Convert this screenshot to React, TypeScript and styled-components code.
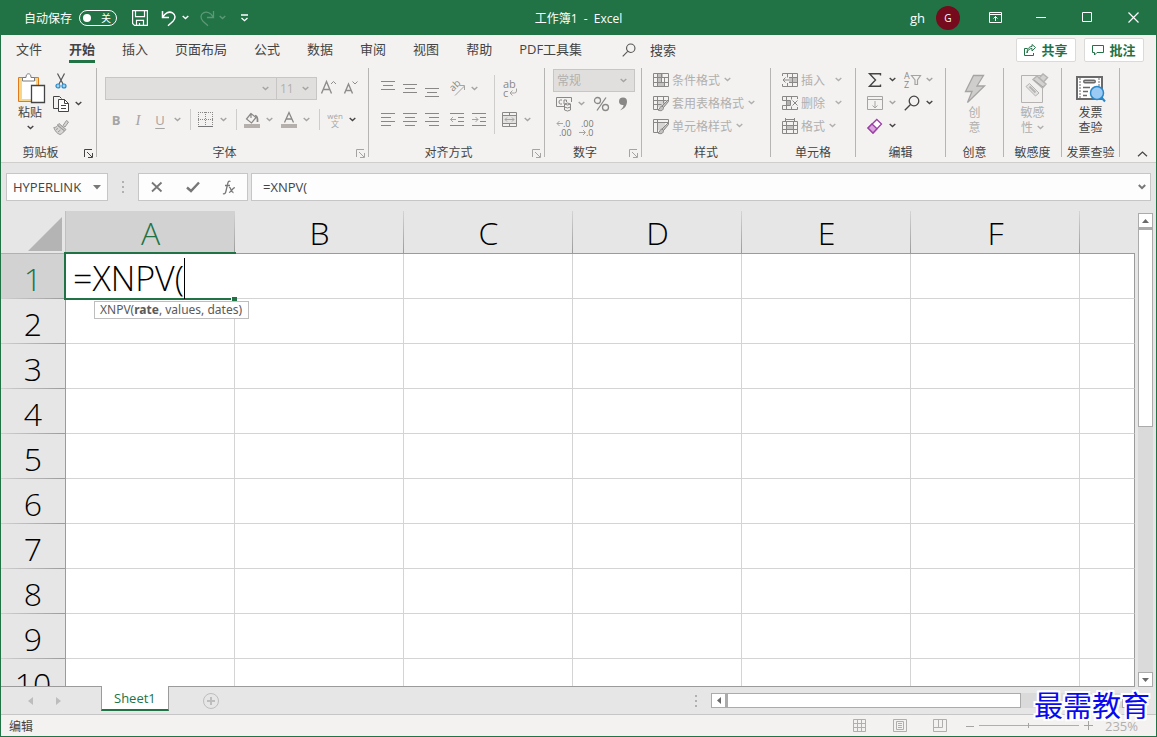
import React from 'react';
import styled, { createGlobalStyle, css } from 'styled-components';

const green = '#217346';
const uiFont = '"Open Sans", "Noto Sans CJK SC", sans-serif';
const dim = '#a6a4a2';
const dark = '#444444';

const GlobalStyle = createGlobalStyle`
  *, *::before, *::after { box-sizing: border-box; }
  body { margin: 0; background: #e6e6e6; font-family: ${uiFont}; font-size: 12px; color: ${dark}; }
  button, input, select { font: inherit; color: inherit; margin: 0; padding: 0; border: 0; background: none; border-radius: 0; outline: 0; }
  svg { display: block; flex: none; overflow: visible; }
`;

const Window = styled.div`
  position: relative;
  display: flex;
  flex-direction: column;
  height: 100vh;
  overflow: hidden;
  border: 1px solid ${green};
  border-top: 0;
`;

/* ---------- title bar ---------- */
const TitleBar = styled.header`
  display: grid;
  grid-template-columns: 1fr auto 1fr;
  align-items: center;
  flex: none;
  height: 35px;
  background: ${green};
  color: #fff;
`;
const QuickAccess = styled.div`
  display: flex;
  align-items: center;
  padding-left: 23px;
`;
const AutoSave = styled.label`
  display: flex;
  align-items: center;
  gap: 7px;
  margin-right: 12px;
`;
const Toggle = styled.span`
  display: flex;
  align-items: center;
  justify-content: space-between;
  width: 38px;
  height: 16px;
  padding: 0 5px 0 3px;
  border: 1px solid #fff;
  border-radius: 8px;
  font-size: 10px;
  line-height: 14px;
`;
const ToggleKnob = styled.input`
  appearance: none;
  width: 8px;
  height: 8px;
  border-radius: 50%;
  background: #fff;
`;
const History = styled.div`
  display: flex;
  align-items: center;
  margin: 0 2px 0 6px;
`;
const Title = styled.h1`
  margin: 0;
  font-size: 12px;
  font-weight: 400;
  white-space: pre;
`;
const WindowControls = styled.div`
  display: flex;
  align-items: center;
  justify-content: flex-end;
  height: 100%;
`;
const UserName = styled.span`
  margin-right: 11px;
  font-size: 13px;
`;
const Avatar = styled.span`
  width: 24px;
  margin-right: 12px;
  border-radius: 50%;
  background: #750b1c;
  font-size: 10px;
  line-height: 24px;
  text-align: center;
`;
const WindowButton = styled.button`
  display: flex;
  align-items: center;
  justify-content: center;
  width: 46px;
  height: 100%;
`;

/* ---------- tabs ---------- */
const TabBar = styled.nav`
  display: flex;
  align-items: center;
  flex: none;
  gap: 27px;
  height: 29px;
  padding: 0 12px 0 15px;
  background: #f3f2f1;
  font-size: 13px;
`;
const Tab = styled.button<{ $active?: boolean }>`
  height: 28px;
  padding-top: 2px;
  align-self: flex-start;
  border-bottom: 3px solid ${p => (p.$active ? green : 'transparent')};
  font-weight: ${p => (p.$active ? 700 : 400)};
  white-space: nowrap;
`;
const Search = styled.button`
  display: flex;
  align-items: center;
  gap: 14px;
  margin-left: 13px;
  white-space: nowrap;
`;
const TabActions = styled.div`
  display: flex;
  gap: 8px;
  margin-left: auto;
`;
const ActionButton = styled.button`
  display: flex;
  align-items: center;
  justify-content: center;
  gap: 5px;
  width: 60px;
  height: 24px;
  border: 1px solid #dcdad8;
  border-radius: 2px;
  background: #fff;
  color: ${green};
  font-weight: 700;
  white-space: nowrap;
`;

/* ---------- ribbon ---------- */
const Ribbon = styled.section`
  display: flex;
  flex: none;
  height: 99px;
  padding: 4px 0 5px;
  border-bottom: 1px solid #d0cecd;
  background: #f3f2f1;
`;
const Group = styled.div<{ $width: number }>`
  display: flex;
  flex-direction: column;
  flex: none;
  width: ${p => p.$width}px;
  border-right: 1px solid #b7b5b3;
`;
const GroupBody = styled.div<{ $pad?: number; $center?: boolean }>`
  display: flex;
  flex: 1;
  justify-content: ${p => (p.$center ? 'center' : 'flex-start')};
  padding-left: ${p => p.$pad ?? 0}px;
`;
const GroupFooter = styled.div`
  display: flex;
  align-items: center;
  height: 16px;
  margin-bottom: -4px;
  line-height: 16px;
  white-space: nowrap;
`;
const GroupName = styled.span`
  flex: 1;
  text-align: center;
`;
const Launcher = styled.button`
  display: flex;
  justify-content: center;
  width: 16px;
`;
const Stack = styled.div<{ $top?: number; $gap?: number; $left?: number }>`
  display: flex;
  flex-direction: column;
  gap: ${p => p.$gap ?? 0}px;
  padding-top: ${p => p.$top ?? 0}px;
  padding-left: ${p => p.$left ?? 0}px;
`;
const Row = styled.div<{ $gap?: number }>`
  display: flex;
  align-items: center;
  height: 23px;
  gap: ${p => p.$gap ?? 0}px;
`;
const Cluster = styled.div`
  display: flex;
  align-items: center;
`;
const ToolButton = styled.button`
  display: flex;
  align-items: center;
  justify-content: center;
  width: 22px;
  height: 22px;
  color: ${dim};
`;
const ArrowButton = styled.button`
  display: flex;
  align-items: center;
  justify-content: center;
  width: 15px;
  height: 22px;
  padding-right: 2px;
`;
const LetterButton = styled(ToolButton)<{ $kind: 'b' | 'i' | 'u' }>`
  font-size: 13px;
  line-height: 16px;
  ${p => p.$kind === 'b' && css`font-weight: 700;`}
  ${p => p.$kind === 'i' && css`font-family: "Liberation Serif", serif; font-style: italic; font-size: 15px;`}
  ${p => p.$kind === 'u' && css`text-decoration: underline; text-underline-offset: 3px;`}
`;
const Divider = styled.span<{ $height: number }>`
  flex: none;
  width: 1px;
  height: ${p => p.$height}px;
  margin: 0 4px;
  background: #cfcdcb;
`;
const MenuButton = styled.button`
  display: flex;
  align-items: center;
  gap: 3px;
  height: 23px;
  color: #b1afad;
  white-space: nowrap;
`;
const MenuText = styled.span<{ $min?: number }>`
  min-width: ${p => p.$min ?? 0}px;
  margin-right: 1px;
  text-align: left;
`;
const BigButton = styled.button<{ $dim?: boolean }>`
  display: flex;
  flex-direction: column;
  align-items: center;
  padding-top: 4px;
  align-self: flex-start;
  color: ${p => (p.$dim ? '#b1afad' : dark)};
  line-height: 15px;
  white-space: nowrap;
`;
const BigIcon = styled.span`
  display: flex;
  align-items: center;
  height: 33px;
`;
const BigLine = styled.span`
  display: flex;
  align-items: center;
  gap: 4px;
  height: 15px;
`;
const ComboFrame = styled.span<{ $width: number; $joined?: boolean }>`
  display: grid;
  grid-template-columns: 1fr 14px;
  align-items: center;
  width: ${p => p.$width}px;
  height: 23px;
  border: 1px solid #c8c6c4;
  ${p => p.$joined && css`border-left: 0;`}
  background: #e1dfdd;
  color: #b1afad;
`;
const Combo = styled.select`
  grid-area: 1 / 1;
  appearance: none;
  height: 21px;
  padding-left: 3px;
  opacity: 1;
`;
const CollapseArea = styled.div`
  display: flex;
  flex: 1;
  align-items: flex-end;
  justify-content: flex-end;
  padding-right: 8px;
`;
const SmallType = styled.span`
  display: flex;
  flex-direction: column;
  align-items: center;
  font-size: 8px;
  line-height: 8px;
`;

/* ---------- formula bar ---------- */
const FormulaBar = styled.section`
  display: flex;
  align-items: center;
  flex: none;
  height: 48px;
  padding: 0 5px;
  background: #e6e6e6;
  font-size: 13px;
`;
const Field = styled.div`
  display: flex;
  align-items: center;
  height: 28px;
  border: 1px solid #c6c6c6;
  background: #fdfdfd;
`;
const NameBox = styled(Field)`
  width: 102px;
  padding: 0 6px;
`;
const FormulaButtons = styled(Field)`
  width: 110px;
  margin-right: 3px;
  justify-content: space-around;
`;
const FormulaField = styled(Field)`
  flex: 1;
  padding: 0 4px 0 11px;
`;
const TextInput = styled.input`
  flex: 1;
  min-width: 0;
`;
const Dots = styled.span`
  display: flex;
  flex-direction: column;
  gap: 3px;
  padding: 0 14px;
  &::before, &::after { content: ''; }
  i, &::before, &::after { width: 2px; height: 2px; background: #b0b0b0; }
`;

/* ---------- sheet ---------- */
const SheetArea = styled.main`
  display: flex;
  flex: 1;
  min-height: 0;
  background: #e6e6e6;
`;
const GridViewport = styled.div`
  flex: 1;
  min-width: 0;
  overflow: hidden;
  border-bottom: 1px solid #9b9b9b;
`;
const Grid = styled.table`
  width: 100%;
  table-layout: fixed;
  border-collapse: separate;
  border-spacing: 0;
  font-size: 32px;
  font-weight: 350;
  line-height: 40px;
  color: #000;
`;
const headCell = css<{ $on?: boolean }>`
  padding: 0;
  font-weight: 350;
  text-align: center;
  background-color: ${p => (p.$on ? '#d2d2d2' : '#e6e6e6')};
  color: ${p => (p.$on ? green : '#000')};
`;
const Corner = styled.td`
  width: 65px;
  height: 43px;
  padding: 3px 3px 0 0;
  border-bottom: 1px solid #b1b1b1;
  border-right: 1px solid #c0c0c0;
`;
const CornerMark = styled.svg`
  margin-left: auto;
`;
const ColumnHead = styled.th<{ $on?: boolean; $last?: boolean }>`
  ${headCell}
  width: ${p => (p.$last ? 'auto' : '169px')};
  height: 43px;
  padding-top: 2px;
  border-bottom: 1px solid #9b9b9b;
  ${p => !p.$last && css`
    background-image: linear-gradient(#d4d4d4, #9b9b9b);
    background-size: 1px 100%;
    background-position: right;
    background-repeat: no-repeat;
  `}
`;
const RowHead = styled.th<{ $on?: boolean }>`
  ${headCell}
  height: 45px;
  padding-top: 4px;
  border-right: 1px solid #9b9b9b;
  background-image: linear-gradient(to right, #d0d0d0, #9b9b9b);
  background-size: 100% 1px;
  background-position: bottom;
  background-repeat: no-repeat;
`;
const Cell = styled.td<{ $last?: boolean }>`
  position: relative;
  padding: 0;
  border-right: 1px solid ${p => (p.$last ? '#9b9b9b' : '#d4d4d4')};
  border-bottom: 1px solid #d4d4d4;
  background: #fff;
`;
const ActiveCell = styled.div`
  position: absolute;
  z-index: 1;
  inset: -2px;
  display: flex;
  align-items: center;
  padding: 4px 0 0 7px;
  border: 2px solid ${green};
  border-right: 0;
  background: #fff;
  &::after {
    content: '';
    position: absolute;
    right: -1px;
    bottom: -3px;
    width: 6px;
    height: 4px;
    background: ${green};
    border-left: 1px solid #fff;
  }
`;
const CellInput = styled.input`
  field-sizing: content;
  height: 40px;
  font-size: 34px;
  line-height: 40px;
`;
const Caret = styled.span`
  width: 1px;
  height: 41px;
  background: #000;
`;
const FunctionTip = styled.div`
  position: absolute;
  z-index: 2;
  top: 47px;
  left: 28px;
  height: 18px;
  padding: 0 6px 0 5px;
  border: 1px solid #bebebe;
  background: #fff;
  color: #5a5a5a;
  font-family: "Noto Sans", sans-serif;
  font-size: 12px;
  font-weight: 400;
  line-height: 15px;
  white-space: nowrap;
`;
const VerticalScroll = styled.div`
  display: flex;
  flex-direction: column;
  width: 15px;
  margin: 2px 3px 0 3px;
  background: #dadada;
`;
const ScrollButton = styled.button`
  display: flex;
  flex: none;
  align-items: center;
  justify-content: center;
  width: 15px;
  height: 15px;
  border: 1px solid #ababab;
  background: #fff;
`;
const VerticalThumb = styled.div`
  flex: 0 0 42%;
  border: 1px solid #ababab;
  border-top-width: 2px;
  background: #fff;
`;
const Filler = styled.div`
  flex: 1;
`;

/* ---------- sheet tabs ---------- */
const SheetBar = styled.section`
  display: flex;
  flex: none;
  height: 27px;
  background: #e6e6e6;
`;
const SheetNav = styled.div`
  display: flex;
  align-items: center;
  justify-content: center;
  gap: 23px;
  width: 100px;
  padding-right: 14px;
`;
const SheetTab = styled.button`
  height: 25px;
  padding: 0 12px;
  margin-top: -1px;
  border: 1px solid #9b9b9b;
  border-top: 0;
  border-bottom: 2px solid ${green};
  background: #fff;
  color: ${green};
  font-size: 13px;
  line-height: 22px;
`;
const AddSheet = styled.button`
  display: flex;
  align-items: center;
  margin-left: 34px;
`;
const HorizontalScroll = styled.div`
  display: flex;
  flex: 0 0 426px;
  height: 15px;
  margin: 6px 19px 0 0;
  background: #dadada;
`;
const HorizontalThumb = styled.div`
  flex: 0 0 295px;
  border: 1px solid #ababab;
  border-left-width: 2px;
  background: #fff;
`;
const DotsHolder = styled.div`
  display: flex;
  align-items: center;
  margin-left: auto;
`;

/* ---------- status bar ---------- */
const StatusBar = styled.footer`
  display: flex;
  align-items: center;
  flex: none;
  height: 22px;
  padding: 0 18px 0 8px;
  border-top: 1px solid #c6c6c6;
  background: #f3f2f1;
`;
const ViewButtons = styled.div`
  display: flex;
  gap: 26px;
  margin: 0 19px 0 auto;
`;
const Zoom = styled.div`
  display: flex;
  align-items: center;
  gap: 5px;
  color: #b1afad;
  font-size: 13px;
`;
const ZoomSlider = styled.input`
  appearance: none;
  width: 100px;
  height: 7px;
  background: linear-gradient(#b1afad, #b1afad) center / 100% 1px no-repeat;
  &::-webkit-slider-thumb {
    appearance: none;
    width: 1px;
    height: 5px;
    background: #a6a4a2;
  }
`;
const ZoomValue = styled.span`
  margin-left: 7px;
`;
const Watermark = styled.div`
  position: absolute;
  right: 6px;
  bottom: 13px;
  color: #0a0af0;
  font-family: "Noto Sans CJK SC", sans-serif;
  font-size: 29px;
  line-height: 38px;
  text-shadow: 2px 0 #fff, -2px 0 #fff, 0 2px #fff, 0 -2px #fff, 2px 2px #fff, -2px -2px #fff, 2px -2px #fff, -2px 2px #fff;
`;

/* ---------- icons ---------- */
type IconProps = { w?: number; h?: number; c?: string; sw?: number; children: React.ReactNode };
const Icon = ({ w = 16, h = 16, c = dim, sw = 1, children }: IconProps) => (
  <svg width={w} height={h} viewBox={`0 0 ${w} ${h}`} fill="none" stroke={c} strokeWidth={sw} aria-hidden="true">
    {children}
  </svg>
);
const Chevron = ({ c = dim }: { c?: string }) => (
  <Icon w={7} h={5} c={c} sw={1.4}><path d="M.7 1 3.5 3.6 6.3 1" /></Icon>
);
const Arrow = ({ c, label }: { c?: string; label: string }) => (
  <ArrowButton aria-label={label}><Chevron c={c} /></ArrowButton>
);
const LaunchIcon = ({ c }: { c?: string }) => (
  <Icon w={9} h={9} c={c}><path d="M.5 8V.5H8M3 3l5 5M8.5 4v4.500H4" /></Icon>
);
const linePath = (rows: [number, number, number][]) => rows.map(([x, y, w]) => `M${x} ${y + 0.5}h${w}`).join('');
const Lines = ({ rows }: { rows: [number, number, number][] }) => (
  <Icon c="#8a8886"><path d={linePath(rows)} /></Icon>
);
const IndentIcon = ({ right }: { right?: boolean }) => (
  <Icon c="#8a8886">
    <path d={linePath([[1, 1, 14], [9, 5, 6], [9, 9, 6], [1, 13, 14]])} />
    <path d={right ? 'M1 7.500h6M4.500 5 7 7.500 4.500 10' : 'M1.500 7.500H7M4 5 1.500 7.500 4 10'} stroke={dim} />
  </Icon>
);
const PasteIcon = () => (
  <Icon w={24} h={32} c={dark}>
    <path d="M2.500 6.500h17v21h-17z" fill="#fff" stroke="#f8d689" strokeWidth="3" />
    <path d="M.5 4.500h20v24H.5z" stroke="#e07b1c" />
    <path d="M4.500 8V4.500H8C8 2 9 .8 10.500.8S13 2 13 4.500h3.500V8z" fill="#fff" stroke="#7a7a7a" />
    <path d="M13.500 12.500h13v17h-13z" fill="#fff" strokeWidth="1.300" />
  </Icon>
);
const CutIcon = () => (
  <Icon c="#555" sw={1.2}>
    <path d="M4.500.5 10 11M11.500.5 6 11" />
    <circle cx="5" cy="13" r="2" stroke="#2b88c8" fill="#9fd3f2" /><circle cx="11" cy="13" r="2" stroke="#2b88c8" fill="#9fd3f2" />
  </Icon>
);
const CopyIcon = () => (
  <Icon c={dark}>
    <path d="M5 12.500H.5V.5h6l2 2" />
    <path d="M5.500 3.500h6l4 4v8h-10z" fill="#fff" /><path d="M11.500 3.500v4h4M8 9.500h5M8 12.500h5" />
  </Icon>
);
const BrushIcon = () => (
  <Icon c="#9a9896">
    <path d="M10 6.500 13.500 1.500 15.500 3 12 8z" fill="#d8d6d4" />
    <path d="M6 4.500 13 10.500 11.500 12 4.500 6z" fill="#c8c6c4" />
    <path d="M4.500 6.500C4 8 2 8.500.8 8.500 2 12 4 14.500 7 15.500c2-.8 3.500-2 4.300-3.700z" fill="#d8d6d4" /><path d="m3 10.500 2-1M5 13l2.500-2" />
  </Icon>
);
const BorderIcon = () => (
  <Icon><path d="M.5 0v14M14.500 0v14M7.500 0v14M0 .5h15M0 7.500h15" strokeDasharray="1 1" stroke="#8a8886" /><path d="M0 14.500h15" stroke="#777" /></Icon>
);
const FillIcon = () => (
  <Icon><path d="M0 14h16" stroke="#b5b0ac" strokeWidth="4" /><path d="M7 1.500 2.500 7l5 4L12 5.500zM7 1.500V6" strokeWidth="1.200" stroke="#8a8886" /><path d="M11 3.500c2 .5 2.800 3 2.500 6.500" strokeWidth="1.800" stroke="#8a8886" /></Icon>
);
const FontColorIcon = () => (
  <Icon><path d="M0 14h16" stroke="#b5b0ac" strokeWidth="4" /><path d="M3.500 10.500 8 .5l4.500 10M5 7h6" strokeWidth="1.300" stroke="#8a8886" /></Icon>
);
const GrowIcon = () => (
  <Icon w={16} c="#8f8d8b" sw={1.4}><path d="M1.500 12.500 6.500.5l5 12M3.300 8.500h6.400" /><path d="m11 3 2.500-2.500L16 3" strokeWidth="1" /></Icon>
);
const ShrinkIcon = () => (
  <Icon w={14} c="#8f8d8b" sw={1.4}><path d="M1.500 12.500 5.500 3l4 9.500M3 9.500h5" /><path d="M9.500.500 12 3 14.500.500" strokeWidth="1" /></Icon>
);
const OrientIcon = () => (
  <Icon>
    <text x="0" y="0" transform="translate(4 11) rotate(-45)" fontSize="10" fontFamily="Open Sans" fill="#8a8886" stroke="none">ab</text>
    <path d="M6 14.500 15.500 5M11 4.500h4.500V9" />
  </Icon>
);
const WrapIcon = () => (
  <Icon h={18}>
    <text x="1" y="8" fontSize="11" fontFamily="Open Sans" fill="#8a8886" stroke="none">ab</text>
    <text x="1" y="17" fontSize="11" fontFamily="Open Sans" fill="#8a8886" stroke="none">c</text>
    <path d="M14.500 8.500V11q0 2-2 2H8M10.500 10.500 8 13l2.500 2.500" />
  </Icon>
);
const MergeIcon = () => (
  <Icon c="#8a8886"><path d="M1 4h13v7H1z" fill="#e4e2e0" stroke="none" /><path d="M.5.500h14v14H.5zM.5 3.500h14M.5 11.500h14M7.500.5v3M7.500 11.500v3" /><path d="M3 7.500h9M5 5.500l-2 2 2 2M10 5.500l2 2-2 2" stroke={dim} /></Icon>
);
const MoneyIcon = () => (
  <Icon c="#8a8886"><path d="M8 10.500H.5v-9h15V6M6 4H4.500Q3 4 3 6t1.500 2H6M8 8V4h2.500v2" /><path d="M8.500 8v6q3 2 6 0V8q-3-2-6 0q3 2 6 0M8.500 11q3 2 6 0" fill="#f3f2f1" /></Icon>
);
const CommaIcon = () => (
  <Icon w={10} h={14}><path d="M1 4.500a4 4 0 1 1 8 0C9 9 6 12 2 13.500 4.500 11 5.500 9.500 5.500 8 3 8.500 1 7 1 4.500z" fill="#8a8886" stroke="none" /></Icon>
);
const DecimalIcon = ({ less }: { less?: boolean }) => (
  <Icon w={16}>
    <text x={less ? 3 : 7} y="8" fontSize="9" fontFamily="Open Sans" fill="#777" stroke="none">{less ? '.00' : '.0'}</text>
    <text x={less ? 8 : 3} y="17" fontSize="9" fontFamily="Open Sans" fill="#777" stroke="none">{less ? '.0' : '.00'}</text>
    <path d={less ? 'M1 13.500h6M5 11l2.500 2.500L5 16' : 'M7 4.500H1M3.500 2 1 4.500 3.500 7'} />
  </Icon>
);
const CondIcon = () => (
  <Icon c="#8a8886"><path d="M5 1h5v5H5zM5 6h3v4H5zM5 10h7v4H5z" fill="#c4c2c0" stroke="none" /><path d="M.5 1.500h15v13H.5zM.5 5.500h15M.5 10.500h15M4.500 1.500v13M8.500 1.500v9M11.500 5.500v9" /></Icon>
);
const TableFormatIcon = ({ cell }: { cell?: boolean }) => (
  <Icon c="#8a8886">
    <path d="M5 5h7v7H5z" fill="#d8d6d4" stroke="none" />
    <path d={cell ? 'M15.500 5V1.500H.5v13H6M.5 4.500h15M4.500 1.500v13' : 'M15.500 5V1.500H.5v13H6M.5 5.500h13M.5 9.500h8M4.500 1.500v13M10.500 1.500v7'} />
    <path d="M15.500 4.500 9 11l1.500 1.500 5-6zM9 11c-2 0-2 3-4 4 3 1.500 5.500.5 5.500-2.500z" fill="#c4c2c0" />
  </Icon>
);
const InsertIcon = () => (
  <Icon c="#8a8886"><path d="M7 6h8v4H7z" fill="#c4c2c0" stroke="none" /><path d="M.5 4V1.500h15v13H.5V12M5.500 1.500v4M10.500 1.500v13M5.500 11v3.500M7 5.500h8.500M7 10.500h8.500M1 8h6M3.500 5.500 1 8l2.500 2.500" /></Icon>
);
const DeleteIcon = () => (
  <Icon c="#8a8886"><path d="M4 6h4v4H4z" fill="#b4b2b0" stroke="none" /><path d="M.5 1.500h15M.5 14.500h15M.5 1.500v4h8v5h-8v4M4.500 1.500v13M9.500 1.500v3M9.500 11.500v3M15.500 1.500V4M15.500 12v2.500M10.500 5.500l5 5M15.500 5.500l-5 5" /></Icon>
);
const FormatIcon = () => (
  <Icon c="#8a8886"><path d="M5 7h6v4H5z" fill="#c4c2c0" stroke="none" /><path d="M.5 3.500h15v12H.5zM.5 7.500h15M.5 11.500h15M4.500 3.500v12M11.500 3.500v12M3.500 0v3M12.500 0v3M4 1.500h8" /></Icon>
);
const SumIcon = () => (
  <Icon c={dark} sw={1.4}><path d="M13.500 3.500V1.700H2.500L8.500 8l-6 6.300h11v-1.800" /></Icon>
);
const SortIcon = () => (
  <Icon w={17} h={18}>
    <text x="0" y="8" fontSize="9" fontFamily="Open Sans" fill="#8a8886" stroke="none">A</text>
    <text x="0" y="17" fontSize="9" fontFamily="Open Sans" fill="#8a8886" stroke="none">Z</text>
    <path d="M7.500 4.500h9L13.500 9v4.500h-2.500V9z" strokeWidth="1.200" />
  </Icon>
);
const FillDownIcon = () => (
  <Icon><path d="M.5 1.500h15v13H.5zM.5 4.500h15M8 6v7M5.500 10.500 8 13l2.500-2.500" /></Icon>
);
const FindIcon = ({ size = 16, c = dark }: { size?: number; c?: string }) => (
  <svg width={size} height={size} viewBox="0 0 16 16" fill="none" stroke={c} strokeWidth="1.300" aria-hidden="true">
    <circle cx="10" cy="6" r="4.800" /><path d="M6.500 9.500.8 15.200" />
  </svg>
);
const EraseIcon = () => (
  <Icon c="#9b3fa5" sw={1.3}><path d="M1 10 9.800 1.500 14.500 6 6 15z" fill="#fff" /><path d="M1 10l4-4 5 4.800L6 15z" fill="#d9a3dd" /></Icon>
);
const BoltIcon = () => (
  <Icon w={22} h={30}><path d="M9.500 1.500h10L13 12h7.500L3.500 28.500 8 17.500H1.500z" fill="#d0cecc" strokeWidth="1.300" /></Icon>
);
const SensitivityIcon = () => (
  <Icon w={22} h={32} c="#b5b3b1">
    <path d="M.5 2.500h21v27H.5z" fill="#f1f0ef" />
    <path d="M5 13.500 8.500 10.500 18 20l-3.500 3z" fill="#e4e2e0" /><path d="m8.500 13.500 6 6" strokeWidth="2" />
    <path d="M12 6.500 16 3l9 8-3.500 4zM18 5l4-4 4.500 3.500-4 4.500z" fill="#d4d2d0" strokeWidth="1.500" /><path d="m13 7 9 7" stroke="#a6a4a2" />
  </Icon>
);
const InvoiceIcon = () => (
  <Icon w={31} h={28} c="#6a6a6a">
    <path d="M2 2h25v22H2z" fill="#fff" strokeWidth="2" /><path d="M5 3v20M24 3v9" strokeDasharray="2 1" />
    <path d="M10 6.500h9" strokeWidth="4" strokeLinecap="round" /><path d="M10 6.500h9" stroke="#bbb" strokeLinecap="round" /><path d="M8 12.500h7M8 16.500h5M8 20.500h4" strokeWidth="1.500" />
    <circle cx="22" cy="18" r="6.500" fill="#9bcbf5" stroke="#2b88c8" strokeWidth="1.500" /><path d="m26.500 22.500 3.500 4" stroke="#2b88c8" strokeWidth="2" />
  </Icon>
);
const Triangle = ({ d, c = '#6a6a6a', w = 7, h = 4 }: { d: string; c?: string; w?: number; h?: number }) => (
  <svg width={w} height={h} viewBox={`0 0 ${w} ${h}`} aria-hidden="true"><path d={d} fill={c} /></svg>
);

/* ---------- page ---------- */
const RibbonGroup = ({ name, width, pad, center, launch, children }: {
  name: string; width: number; pad?: number; center?: boolean; launch?: string; children: React.ReactNode;
}) => (
  <Group $width={width} role="group" aria-label={name}>
    <GroupBody $pad={pad} $center={center}>{children}</GroupBody>
    <GroupFooter>
      <GroupName>{name}</GroupName>
      {launch && <Launcher aria-label={`${name}设置`}><LaunchIcon c={launch} /></Launcher>}
    </GroupFooter>
  </Group>
);

const MenuItem = ({ icon, text, min }: { icon: React.ReactNode; text: string; min?: number }) => (
  <MenuButton>{icon}<MenuText $min={min}>{text}</MenuText><Chevron c="#b1afad" /></MenuButton>
);

const tabs = ['文件', '开始', '插入', '页面布局', '公式', '数据', '审阅', '视图', '帮助', 'PDF工具集'];
const columns = ['A', 'B', 'C', 'D', 'E', 'F', ''];
const rows = Array.from({ length: 10 }, (_, i) => i + 1);

const ActiveEditor = () => (
  <>
    <ActiveCell>
      <CellInput aria-label="A1" value="=XNPV(" size={6} readOnly />
      <Caret />
    </ActiveCell>
    <FunctionTip>XNPV(<b>rate</b>, values, dates)</FunctionTip>
  </>
);

export default function App() {
  return (
    <Window>
      <GlobalStyle />
      <TitleBar>
        <QuickAccess>
          <AutoSave>
            自动保存
            <Toggle><ToggleKnob type="checkbox" role="switch" />关</Toggle>
          </AutoSave>
          <ToolButton aria-label="保存"><Icon c="#fff" sw={1.2}><path d="M.6.600h14.800v14.800H2.500L.6 13.500zM3.500.600v6h9v-6M4.500 15.400v-5h7v5M7.500 15v-2" /></Icon></ToolButton>
          <History>
            <ToolButton aria-label="撤消"><Icon w={22} c="#fff" sw={1.5}><path d="M5.500 1v6.500H12M5.800 7.200C8 3 12 1 15.500 2.800c3.500 2 3 6 .5 8.500L11 15.800" /></Icon></ToolButton>
            <Arrow c="#fff" label="撤消选项" />
            <ToolButton aria-label="恢复"><Icon w={22} c="#5c9877" sw={1.3}><path d="M19.500 1v6.500H13M19.200 7.200C17 3 13 1 9.500 2.800c-3.500 2-3 6-.5 8.500l5 4.500" /></Icon></ToolButton>
            <Arrow c="#5c9877" label="恢复选项" />
          </History>
          <ToolButton aria-label="自定义快速访问工具栏"><Icon w={9} h={8} c="#fff" sw={1.3}><path d="M1 1h7M1.500 4l3 2.700 3-2.700" /></Icon></ToolButton>
        </QuickAccess>
        <Title>工作簿1  -  Excel</Title>
        <WindowControls>
          <UserName>gh</UserName>
          <Avatar>G</Avatar>
          <WindowButton aria-label="功能区显示选项"><Icon w={13} h={11} c="#fff"><path d="M.5.500h12v10H.5zM.5 2.500h12M6.500 9V4.500M4.500 6.500l2-2 2 2" /></Icon></WindowButton>
          <WindowButton aria-label="最小化"><Icon w={11} h={11} c="#fff"><path d="M0 5.500h10" /></Icon></WindowButton>
          <WindowButton aria-label="最大化"><Icon w={11} h={11} c="#fff"><path d="M.5.500h9v9h-9z" /></Icon></WindowButton>
          <WindowButton aria-label="关闭"><Icon w={11} h={11} c="#fff" sw={1.2}><path d="m.5.500 10 10M10.500.500l-10 10" /></Icon></WindowButton>
        </WindowControls>
      </TitleBar>

      <TabBar>
        {tabs.map(t => <Tab key={t} $active={t === '开始'}>{t}</Tab>)}
        <Search><FindIcon size={14} c="#555" />搜索</Search>
        <TabActions>
          <ActionButton><Icon w={12} h={12} c={green}><path d="M3.500 4.500h-3v7h9V9M3 9c.5-3 2.500-4.500 5-4.500V7L11.500 3.500 8 .500v2C5 2.500 3 5 3 9z" /></Icon>共享</ActionButton>
          <ActionButton><Icon w={12} h={12} c={green}><path d="M.5 1.500h11v7H5L2.500 11V8.500h-2z" /></Icon>批注</ActionButton>
        </TabActions>
      </TabBar>

      <Ribbon>
        <RibbonGroup name="剪贴板" width={96} pad={17} launch={dark}>
          <BigButton>
            <BigIcon><PasteIcon /></BigIcon>
            <BigLine>粘贴</BigLine>
            <BigLine><Chevron c={dark} /></BigLine>
          </BigButton>
          <Stack $top={1} $left={8}>
            <Row><ToolButton aria-label="剪切"><CutIcon /></ToolButton></Row>
            <Row><ToolButton aria-label="复制"><CopyIcon /></ToolButton><Arrow c={dark} label="复制选项" /></Row>
            <Row><ToolButton aria-label="格式刷"><BrushIcon /></ToolButton></Row>
          </Stack>
        </RibbonGroup>

        <RibbonGroup name="字体" width={272} pad={8} launch={dim}>
          <Stack $top={9} $gap={8}>
            <Row>
              <ComboFrame $width={172}><Combo aria-label="字体" disabled><option></option></Combo><Chevron /></ComboFrame>
              <ComboFrame $width={40} $joined><Combo aria-label="字号" disabled><option>11</option></Combo><Chevron /></ComboFrame>
              <ToolButton aria-label="增大字号"><GrowIcon /></ToolButton>
              <ToolButton aria-label="减小字号"><ShrinkIcon /></ToolButton>
            </Row>
            <Row>
              <LetterButton $kind="b">B</LetterButton>
              <LetterButton $kind="i">I</LetterButton>
              <LetterButton $kind="u">U</LetterButton>
              <Arrow label="下划线选项" />
              <Divider $height={21} />
              <ToolButton aria-label="边框"><BorderIcon /></ToolButton>
              <Arrow label="边框选项" />
              <Divider $height={21} />
              <ToolButton aria-label="填充颜色"><FillIcon /></ToolButton>
              <Arrow label="填充颜色选项" />
              <ToolButton aria-label="字体颜色"><FontColorIcon /></ToolButton>
              <Arrow label="字体颜色选项" />
              <Divider $height={21} />
              <ToolButton aria-label="拼音指南"><SmallType><span>wén</span><span>文</span></SmallType></ToolButton>
              <Arrow c={dark} label="拼音选项" />
            </Row>
          </Stack>
        </RibbonGroup>

        <RibbonGroup name="对齐方式" width={176} pad={8} launch={dim}>
          <Stack $top={9} $gap={8}>
            <Row $gap={3}>
              <Cluster>
                <ToolButton aria-label="顶端对齐"><Lines rows={[[1, 0, 14], [3, 4, 10], [1, 8, 14]]} /></ToolButton>
                <ToolButton aria-label="垂直居中"><Lines rows={[[1, 3, 14], [3, 7, 10], [1, 11, 14]]} /></ToolButton>
                <ToolButton aria-label="底端对齐"><Lines rows={[[1, 7, 14], [3, 11, 10], [1, 15, 14]]} /></ToolButton>
              </Cluster>
              <Cluster><ToolButton aria-label="方向"><OrientIcon /></ToolButton><Arrow label="方向选项" /></Cluster>
            </Row>
            <Row $gap={3}>
              <Cluster>
                <ToolButton aria-label="左对齐"><Lines rows={[[1, 1, 14], [1, 5, 10], [1, 9, 14], [1, 13, 10]]} /></ToolButton>
                <ToolButton aria-label="居中"><Lines rows={[[1, 1, 14], [3, 5, 10], [1, 9, 14], [3, 13, 10]]} /></ToolButton>
                <ToolButton aria-label="右对齐"><Lines rows={[[1, 1, 14], [5, 5, 10], [1, 9, 14], [5, 13, 10]]} /></ToolButton>
              </Cluster>
              <Cluster>
                <ToolButton aria-label="减少缩进量"><IndentIcon /></ToolButton>
                <ToolButton aria-label="增加缩进量"><IndentIcon right /></ToolButton>
              </Cluster>
            </Row>
          </Stack>
          <Stack $top={7}><Divider $height={59} /></Stack>
          <Stack $top={9} $gap={8}>
            <Row><ToolButton aria-label="自动换行"><WrapIcon /></ToolButton></Row>
            <Row><ToolButton aria-label="合并后居中"><MergeIcon /></ToolButton><Arrow label="合并选项" /></Row>
          </Stack>
        </RibbonGroup>

        <RibbonGroup name="数字" width={97} pad={8} launch={dim}>
          <Stack $top={1}>
            <ComboFrame $width={82}><Combo aria-label="数字格式" disabled><option>常规</option></Combo><Chevron /></ComboFrame>
            <Row>
              <ToolButton aria-label="会计数字格式"><MoneyIcon /></ToolButton>
              <Arrow label="会计格式选项" />
              <ToolButton aria-label="百分比样式"><Icon w={17} c="#8a8886" sw={1.3}><circle cx="4.500" cy="4.500" r="3" /><circle cx="12.500" cy="11.500" r="3" /><path d="M13 1.500 4 14.500" /></Icon></ToolButton>
              <ToolButton aria-label="千位分隔样式"><CommaIcon /></ToolButton>
            </Row>
            <Row>
              <ToolButton aria-label="增加小数位数"><DecimalIcon /></ToolButton>
              <ToolButton aria-label="减少小数位数"><DecimalIcon less /></ToolButton>
            </Row>
          </Stack>
        </RibbonGroup>

        <RibbonGroup name="样式" width={129} pad={11}>
          <Stack>
            <MenuItem icon={<CondIcon />} text="条件格式" />
            <MenuItem icon={<TableFormatIcon />} text="套用表格格式" />
            <MenuItem icon={<TableFormatIcon cell />} text="单元格样式" />
          </Stack>
        </RibbonGroup>

        <RibbonGroup name="单元格" width={85} pad={11}>
          <Stack>
            <MenuItem icon={<InsertIcon />} text="插入" min={30} />
            <MenuItem icon={<DeleteIcon />} text="删除" min={30} />
            <MenuItem icon={<FormatIcon />} text="格式" />
          </Stack>
        </RibbonGroup>

        <RibbonGroup name="编辑" width={90} pad={8}>
          <Stack>
            <Row>
              <ToolButton aria-label="自动求和"><SumIcon /></ToolButton><Arrow c={dark} label="求和选项" />
              <ToolButton aria-label="排序和筛选"><SortIcon /></ToolButton><Arrow label="排序选项" />
            </Row>
            <Row>
              <ToolButton aria-label="填充"><FillDownIcon /></ToolButton><Arrow label="填充选项" />
              <ToolButton aria-label="查找和选择"><FindIcon /></ToolButton><Arrow c={dark} label="查找选项" />
            </Row>
            <Row><ToolButton aria-label="清除"><EraseIcon /></ToolButton><Arrow c={dark} label="清除选项" /></Row>
          </Stack>
        </RibbonGroup>

        <RibbonGroup name="创意" width={58} center>
          <BigButton $dim><BigIcon><BoltIcon /></BigIcon><BigLine>创</BigLine><BigLine>意</BigLine></BigButton>
        </RibbonGroup>
        <RibbonGroup name="敏感度" width={58} center>
          <BigButton $dim><BigIcon><SensitivityIcon /></BigIcon><BigLine>敏感</BigLine><BigLine>性<Chevron c="#b1afad" /></BigLine></BigButton>
        </RibbonGroup>
        <RibbonGroup name="发票查验" width={58} center>
          <BigButton><BigIcon><InvoiceIcon /></BigIcon><BigLine>发票</BigLine><BigLine>查验</BigLine></BigButton>
        </RibbonGroup>
        <CollapseArea>
          <button aria-label="折叠功能区"><Icon w={11} h={6} c={dark} sw={1.2}><path d="M1 5.300 5.500 1 10 5.300" /></Icon></button>
        </CollapseArea>
      </Ribbon>

      <FormulaBar>
        <NameBox>
          <TextInput aria-label="名称框" defaultValue="HYPERLINK" />
          <button aria-label="名称列表"><Triangle d="M0 0h8L4 4.500z" w={8} h={5} c="#777" /></button>
        </NameBox>
        <Dots><i /></Dots>
        <FormulaButtons>
          <ToolButton aria-label="取消"><Icon w={12} h={12} c="#777" sw={1.8}><path d="m1 1.500 9.500 9M10.500 1.500 1 10.500" /></Icon></ToolButton>
          <ToolButton aria-label="输入"><Icon w={14} h={12} c="#777" sw={2.4}><path d="m1 6.500 4 3.500 8-8.500" /></Icon></ToolButton>
          <ToolButton aria-label="插入函数">
            <Icon w={14} h={15} c="#777" sw={1.3}><path d="M8.500 1.500C6.500.5 6 2 5.500 4.500L4 11c-.5 2.500-1.500 3.500-3 2.500M3 5.500h5M7 7.500c2-.8 2 5.500 4.500 5M12.800 7.800C10.500 7 9.500 13 7 12.300" /></Icon>
          </ToolButton>
        </FormulaButtons>
        <FormulaField>
          <TextInput aria-label="编辑栏" defaultValue="=XNPV(" />
          <button aria-label="展开编辑栏"><Icon w={8} h={6} c="#777" sw={2}><path d="M.8 1 4 4.200 7.200 1" /></Icon></button>
        </FormulaField>
      </FormulaBar>

      <SheetArea>
        <GridViewport>
          <Grid>
            <thead>
              <tr>
                <Corner><CornerMark width="34" height="34" viewBox="0 0 34 34" aria-hidden="true"><path d="M34 0v34H0z" fill="#b4b4b4" /></CornerMark></Corner>
                {columns.map((c, i) => <ColumnHead key={i} scope="col" $on={c === 'A'} $last={!c}>{c}</ColumnHead>)}
              </tr>
            </thead>
            <tbody>
              {rows.map(r => (
                <tr key={r}>
                  <RowHead scope="row" $on={r === 1}>{r}</RowHead>
                  {columns.map((c, i) => <Cell key={i} $last={!c}>{r === 1 && c === 'A' && <ActiveEditor />}</Cell>)}
                </tr>
              ))}
            </tbody>
          </Grid>
        </GridViewport>
        <VerticalScroll>
          <ScrollButton aria-label="向上滚动"><Triangle d="M0 4h7L3.500 0z" /></ScrollButton>
          <VerticalThumb />
          <Filler />
          <ScrollButton aria-label="向下滚动"><Triangle d="M0 0h7L3.500 4z" /></ScrollButton>
        </VerticalScroll>
      </SheetArea>

      <SheetBar>
        <SheetNav>
          <button aria-label="上一个工作表"><Triangle d="M5 0v8L0 4z" c="#bdbdbd" w={5} h={8} /></button>
          <button aria-label="下一个工作表"><Triangle d="M0 0v8l5-4z" c="#bdbdbd" w={5} h={8} /></button>
        </SheetNav>
        <SheetTab>Sheet1</SheetTab>
        <AddSheet aria-label="新工作表"><Icon w={16} c="#bdbdbd"><circle cx="8" cy="8" r="7.500" /><path d="M4 8h8M8 4v8" strokeWidth="2" /></Icon></AddSheet>
        <DotsHolder><Dots><i /></Dots></DotsHolder>
        <HorizontalScroll>
          <ScrollButton aria-label="向左滚动"><Triangle d="M4 0v7L0 3.500z" w={4} h={7} /></ScrollButton>
          <HorizontalThumb />
          <Filler />
          <ScrollButton aria-label="向右滚动"><Triangle d="M0 0v7l4-3.500z" w={4} h={7} /></ScrollButton>
        </HorizontalScroll>
      </SheetBar>

      <StatusBar>
        编辑
        <ViewButtons>
          <button aria-label="普通"><Icon w={14} h={13} c="#b1afad"><path d="M.5.500h12v12H.5zM.5 4.500h12M.5 8.500h12M4.500.500v12M8.500.500v12" /></Icon></button>
          <button aria-label="页面布局"><Icon w={14} h={13} c="#b1afad"><path d="M.5.500h13v12H.5zM3.500 2.500h7v8h-7zM5 4.500h4M5 6.500h4M5 8.500h4" /></Icon></button>
          <button aria-label="分页预览"><Icon w={14} h={13} c="#b1afad"><path d="M.5.500h13v12H.5zM.5 8.500h9V.500M5.500.500v8" /></Icon></button>
        </ViewButtons>
        <Zoom>
          <button aria-label="缩小"><Icon w={8} h={8} c="#a6a4a2"><path d="M0 4.500h8" /></Icon></button>
          <ZoomSlider type="range" aria-label="显示比例" min={0} max={100} defaultValue={50} />
          <button aria-label="放大"><Icon w={9} h={9} c="#a6a4a2"><path d="M0 4.500h9M4.500 0v9" /></Icon></button>
          <ZoomValue>235%</ZoomValue>
        </Zoom>
      </StatusBar>
      <Watermark>最需教育</Watermark>
    </Window>
  );
}
